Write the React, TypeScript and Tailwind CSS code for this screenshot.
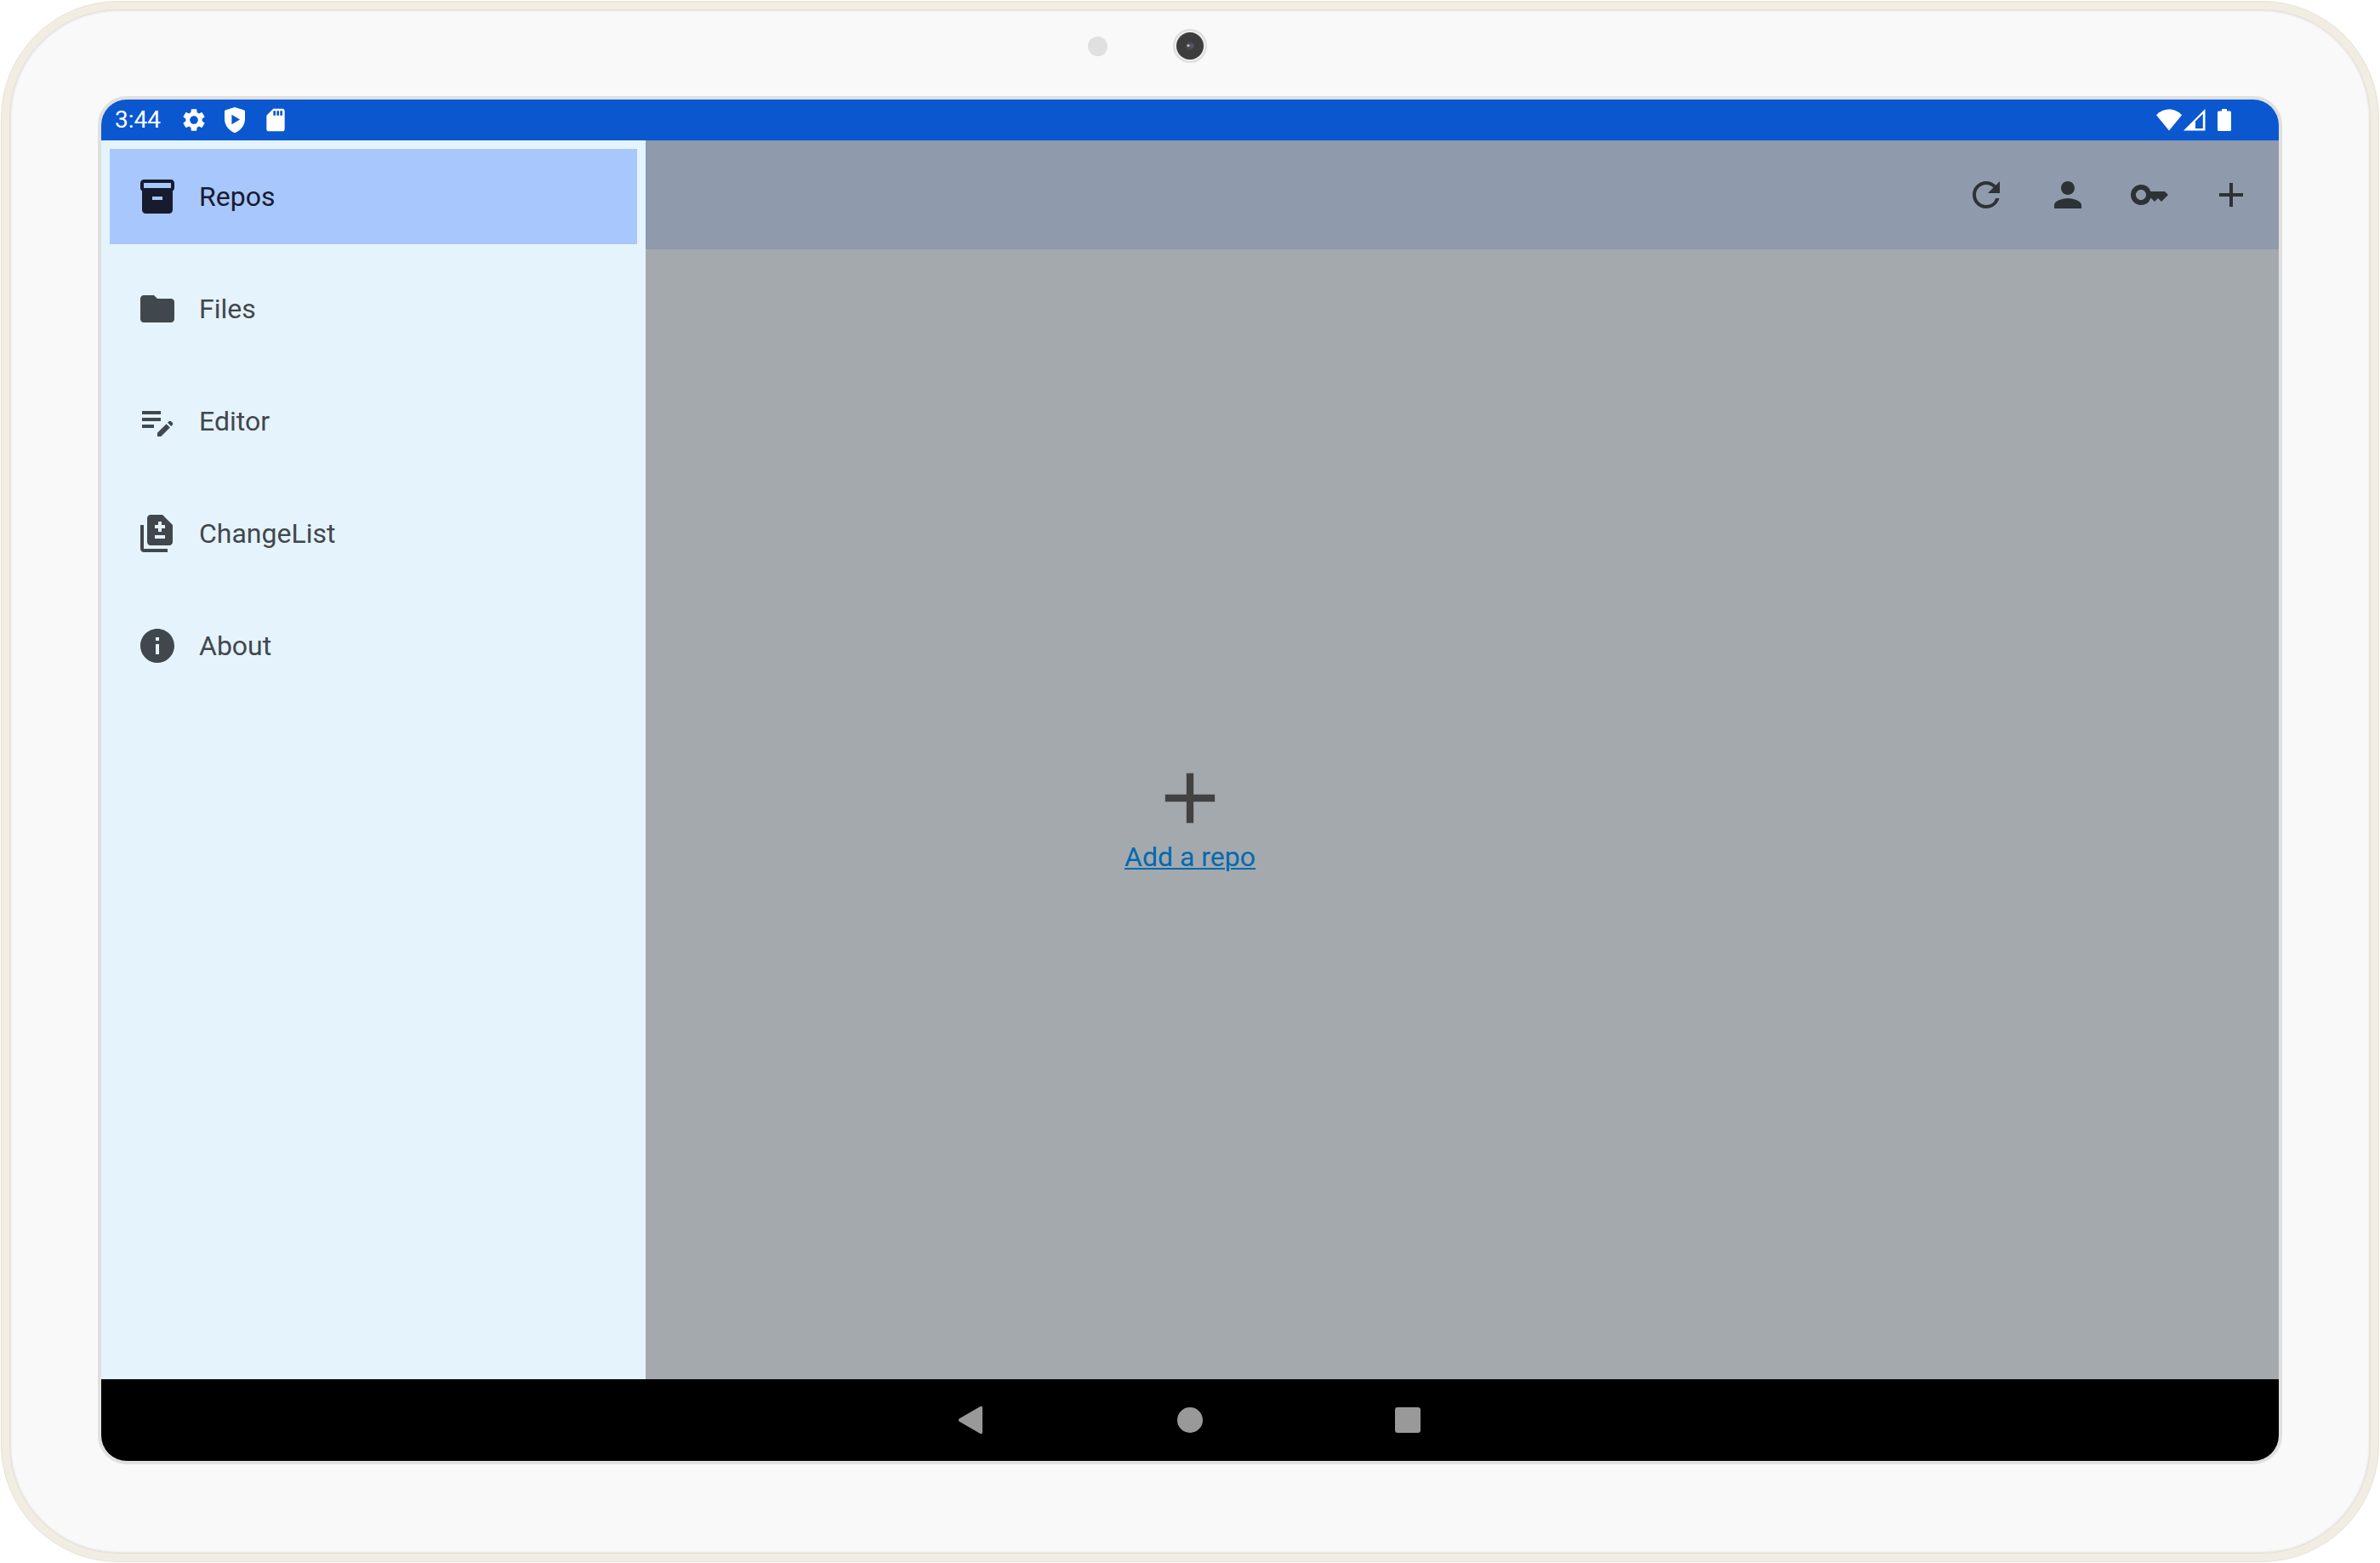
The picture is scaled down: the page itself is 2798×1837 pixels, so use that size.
import type { ReactNode } from "react";
import {
  MdAdd,
  MdFolder,
  MdInfo,
  MdKey,
  MdPerson,
  MdRefresh,
  MdSdCard,
  MdSettings,
} from "react-icons/md";

function ShieldPlayIcon() {
  return (
    <svg viewBox="0 0 24 24" className="size-8" fill="currentColor" aria-hidden="true">
      <path
        fillRule="evenodd"
        d="M12.6.9l7.3 2.3c.7.2 1.1.8 1.1 1.5V11c0 5.6-3.7 10.2-9 12.4C6.700 21.200 3 16.600 3 11V4.700c0-.7.4-1.300 1.100-1.500L11.400.9c.4-.1.8-.1 1.200 0zM9.300 7.400v8.600l7.200-4.300z"
      />
    </svg>
  );
}

function WifiIcon() {
  return (
    <svg viewBox="0 0 30 26" className="h-[26px] w-[30px]" fill="currentColor" aria-hidden="true">
      <path d="M15 25.500L0 7.200C4 2.900 9.300.5 15 .5s11 2.400 15 6.700z" />
    </svg>
  );
}

function SignalIcon() {
  return (
    <svg viewBox="0 0 26 26" className="size-[26px]" fill="currentColor" aria-hidden="true">
      <path fillRule="evenodd" d="M0 25.500L25.500 0v25.500zM14 14.500v8.500h8.800V5.800z" />
    </svg>
  );
}

function BatteryIcon() {
  return (
    <svg viewBox="0 0 16 26" className="h-[26px] w-4" fill="currentColor" aria-hidden="true">
      <path d="M5 0h6v2.500h3.500A1.500 1.500 0 0 1 16 4v20.500a1.500 1.500 0 0 1-1.500 1.500h-13A1.500 1.500 0 0 1 0 24.500V4a1.500 1.500 0 0 1 1.500-1.500H5z" />
    </svg>
  );
}

function ArchiveIcon() {
  return (
    <svg viewBox="0 0 24 24" className="size-12" fill="currentColor" aria-hidden="true">
      <path
        fillRule="evenodd"
        d="M20 2H4c-1 0-2 .9-2 2v3.010c0 .72.43 1.340 1 1.690V20c0 1.100 1.100 2 2 2h14c.9 0 2-.9 2-2V8.700c.57-.35 1-.97 1-1.690V4c0-1.100-1-2-2-2zm-5 12H9v-2h6v2zm5-7H4V4h16v3z"
      />
    </svg>
  );
}

function EditNoteIcon() {
  return (
    <svg viewBox="0 0 24 24" className="size-12" fill="currentColor" aria-hidden="true">
      <path d="M3 10h11v2H3v-2zm0-2h11V6H3v2zm0 8h7v-2H3v2zm15.010-3.130l.71-.71c.39-.39 1.020-.39 1.410 0l.71.71c.39.39.39 1.020 0 1.410l-.71.71-2.120-2.120zm-.71.71l-5.300 5.300V21h2.120l5.300-5.300-2.120-2.120z" />
    </svg>
  );
}

function DifferenceIcon() {
  return (
    <svg viewBox="0 0 24 24" className="size-12" fill="currentColor" aria-hidden="true">
      <path
        fillRule="evenodd"
        d="M18 23H4c-1.100 0-2-.9-2-2V7h2v14h14v2zM15 1H8c-1.100 0-1.990.9-1.990 2L6 17c0 1.100.89 2 1.990 2H19c1.100 0 2-.9 2-2V7l-6-6zm1.500 14h-6v-2h6v2zm0-6h-2v2h-2V9h-2V7h2V5h2v2h2v2z"
      />
    </svg>
  );
}

const drawerItems: { label: string; icon: ReactNode; selected?: boolean }[] = [
  { label: "Repos", icon: <ArchiveIcon />, selected: true },
  { label: "Files", icon: <MdFolder className="size-12" /> },
  { label: "Editor", icon: <EditNoteIcon /> },
  { label: "ChangeList", icon: <DifferenceIcon /> },
  { label: "About", icon: <MdInfo className="size-12" /> },
];

const toolbarActions: { label: string; icon: ReactNode }[] = [
  { label: "Refresh", icon: <MdRefresh className="size-12" /> },
  { label: "Credentials", icon: <MdPerson className="size-12" /> },
  { label: "Keys", icon: <MdKey className="size-12" /> },
  { label: "Add", icon: <MdAdd className="size-12" /> },
];

function StatusBar() {
  return (
    <div className="flex h-12 shrink-0 items-center justify-between bg-[#0b57d0] pr-14 pl-4 text-white">
      <div className="flex items-center gap-4">
        <time className="w-[61px] text-[28px] leading-8">3:44</time>
        <MdSettings className="size-8" />
        <ShieldPlayIcon />
        <MdSdCard className="size-8" />
      </div>
      <div className="flex items-center">
        <WifiIcon />
        <div className="ml-0.5 flex items-center gap-3.5">
          <SignalIcon />
          <BatteryIcon />
        </div>
      </div>
    </div>
  );
}

function Drawer() {
  return (
    <nav className="absolute inset-y-0 left-0 flex w-[640px] flex-col gap-5 bg-[#e5f3fc] p-2.5">
      {drawerItems.map((item) => (
        <button
          key={item.label}
          type="button"
          aria-current={item.selected ? "page" : undefined}
          className={
            item.selected
              ? "flex h-28 items-center gap-[25px] bg-[#a8c7fc] px-8 text-[#171b2e]"
              : "flex h-28 items-center gap-[25px] px-8 text-[#41484d]"
          }
        >
          {item.icon}
          <span className="text-[32px] leading-10">{item.label}</span>
        </button>
      ))}
    </nav>
  );
}

function NavigationBar() {
  return (
    <div className="flex h-24 shrink-0 items-center justify-center gap-52 bg-black text-[#999999]">
      <button type="button" aria-label="Back">
        <svg viewBox="0 0 48 48" className="size-12" fill="currentColor">
          <path d="M8.900 22.300L33.500 7.900a1.700 1.700 0 0 1 2.500 1.500v29.200a1.700 1.700 0 0 1-2.500 1.500L8.900 25.700a2 2 0 0 1 0-3.400z" />
        </svg>
      </button>
      <button type="button" aria-label="Home" className="flex size-12 items-center justify-center">
        <span className="size-[30px] rounded-full bg-[#999999]" />
      </button>
      <button type="button" aria-label="Recent apps" className="flex size-12 items-center justify-center">
        <span className="size-[30px] rounded-[3px] bg-[#999999]" />
      </button>
    </div>
  );
}

export default function App() {
  return (
    <div className="flex min-h-screen bg-white p-px font-[Roboto,sans-serif]">
      <div className="flex flex-1 rounded-[138px] border border-[#e6e2d5] bg-[#f1ede2] p-[9px]">
        <div className="flex flex-1 flex-col rounded-[128px] border border-[#e5dfd3] bg-[#f9f9f9] px-[103px] pb-[104px] shadow-[inset_0_0_2px_1px_#e4e4e4]">
          <div className="grid h-[101px] grid-cols-[1fr_auto_1fr] pt-[22px]">
            <div className="flex h-10 items-center justify-end pr-[77px]">
              <span className="size-[23px] rounded-full bg-[#e0e0e0]" />
            </div>
            <div className="flex size-10 items-center justify-center rounded-full border-2 border-[#dfdfdf] bg-[#ebebeb]">
              <div className="flex size-8 items-center justify-center rounded-full bg-[#3d3d3d]">
                <svg viewBox="0 0 12 12" className="size-3" aria-hidden="true">
                  <circle cx="6" cy="6" r="5" fill="#4c474b" />
                  <circle cx="8" cy="6" r="2.500" fill="#5a5468" />
                  <circle cx="4" cy="5.500" r="1.500" fill="#c9c5ce" />
                </svg>
              </div>
            </div>
          </div>

          <div className="flex flex-1 flex-col rounded-[34px] border-4 border-[#e0e0e0]">
            <div className="flex flex-1 flex-col overflow-hidden rounded-[30px]">
              <StatusBar />
              <div className="relative flex flex-1 flex-col bg-[#a4a9ad]">
                <header className="flex h-32 shrink-0 items-center justify-end gap-12 bg-[#8f9aac] px-8 text-[#2d3235]">
                  {toolbarActions.map((action) => (
                    <button key={action.label} type="button" aria-label={action.label}>
                      {action.icon}
                    </button>
                  ))}
                </header>
                <main className="flex flex-1 flex-col items-center justify-center">
                  <MdAdd className="size-[100px] text-[#424242]" />
                  <a
                    href="#add"
                    className="text-[32px] leading-[38px] text-[#0069af] underline decoration-2 underline-offset-2"
                  >
                    Add a repo
                  </a>
                </main>
                <Drawer />
              </div>
              <NavigationBar />
            </div>
          </div>
        </div>
      </div>
    </div>
  );
}
